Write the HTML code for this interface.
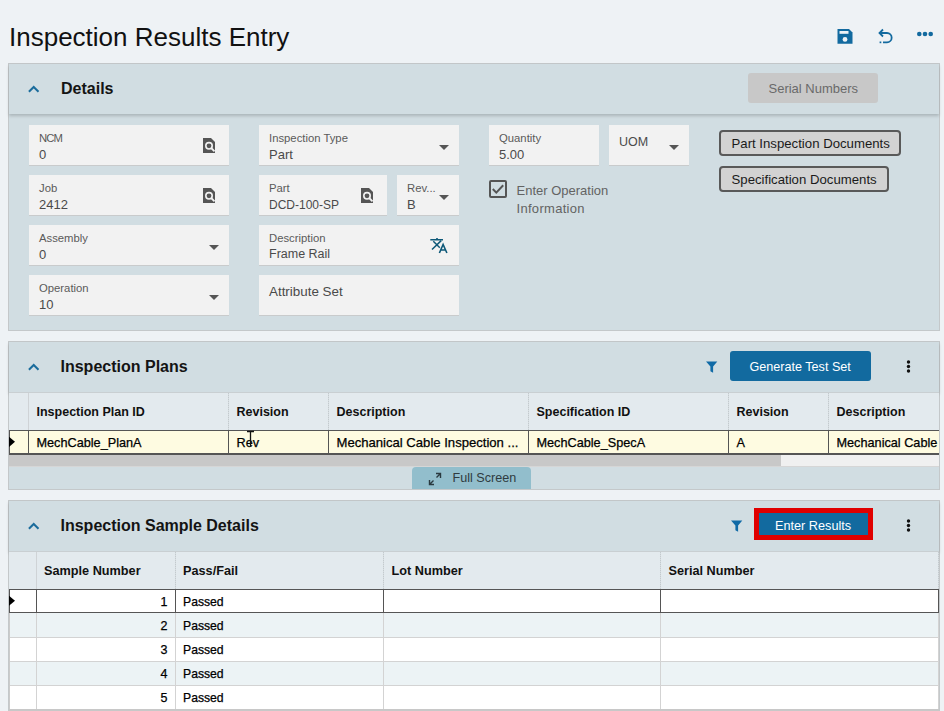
<!DOCTYPE html>
<html><head><meta charset="utf-8">
<style>
*{box-sizing:border-box;margin:0;padding:0}
html,body{width:944px;height:711px;overflow:hidden;background:#eef2f5;font-family:"Liberation Sans",sans-serif;position:relative}
.a{position:absolute}
.t{position:absolute;line-height:1;white-space:nowrap}
.panel{position:absolute;left:8px;width:932px;background:#d1dde2;border:1px solid #c4c8ca}
.ph{position:absolute;left:0;top:0;width:930px;height:50px;box-shadow:0 2px 3px rgba(0,0,0,.18)}
.fld{position:absolute;background:#f2f2f2;border-bottom:1px solid #c9cbcc}
.lbl{position:absolute;font-size:11.3px;color:#5a5a5a;line-height:1;white-space:nowrap}
.val{position:absolute;font-size:13px;color:#4a4a4a;line-height:1;white-space:nowrap}
.dd{position:absolute;width:0;height:0;border-left:5px solid transparent;border-right:5px solid transparent;border-top:5px solid #555}
.chev{position:absolute;width:8px;height:8px;border-left:1.8px solid #1f6f9c;border-top:1.8px solid #1f6f9c;transform:rotate(45deg);margin-top:0.5px}
.btn{position:absolute;background:#126a9f;border-radius:3px}
.gh{position:absolute;background:#e3eaee}
.hd{position:absolute;font-size:13px;font-weight:bold;color:#111;line-height:1;white-space:nowrap}
.cell{position:absolute;font-size:13px;color:#000;-webkit-text-stroke:0.25px #000;line-height:1;white-space:nowrap}
</style></head>
<body>
<!-- Title -->
<div class="t" style="left:9px;top:23.7px;font-size:26px;color:#111">Inspection Results Entry</div>

<!-- toolbar icons -->
<svg class="a" style="left:836px;top:28px" width="18" height="17" viewBox="0 0 18 17">
  <path d="M1.5 1 H13 L16.5 4.5 V15.8 H1.5 Z" fill="#126a9f"/>
  <rect x="3.5" y="3" width="9" height="2.8" fill="#eef2f5"/>
  <circle cx="9" cy="11.4" r="2.4" fill="#eef2f5"/>
</svg>
<svg class="a" style="left:877px;top:28px" width="17" height="17" viewBox="0 0 17 17">
  <path d="M6 1.5 L2.5 5 L6 8.5" fill="none" stroke="#126a9f" stroke-width="1.8"/>
  <path d="M2.5 5 H10 A4.65 4.65 0 0 1 10 14.3 H6" fill="none" stroke="#126a9f" stroke-width="1.8"/>
  <rect x="2.6" y="13.5" width="1.7" height="1.7" fill="#126a9f"/>
</svg>
<svg class="a" style="left:916px;top:30px" width="18" height="8" viewBox="0 0 18 8">
  <circle cx="3.3" cy="4" r="2.3" fill="#126a9f"/>
  <circle cx="9" cy="4" r="2.3" fill="#126a9f"/>
  <circle cx="14.7" cy="4" r="2.3" fill="#126a9f"/>
</svg>

<!-- DETAILS PANEL -->
<div class="panel" style="top:63px;height:268px">
  <div class="ph"></div>
</div>
<svg class="a" style="left:27px;top:84.0px" width="14" height="10" viewBox="0 0 14 10"><path d="M1.9 7.8 L6.7 3 L11.5 7.8" fill="none" stroke="#1b6c9c" stroke-width="2"/></svg>
<div class="t" style="left:61px;top:81.2px;font-size:16px;font-weight:bold;color:#141414">Details</div>
<div class="a" style="left:748px;top:73px;width:130px;height:30px;background:#c8c8c8;border-radius:3px"></div>
<div class="t" style="left:768.5px;top:82.2px;font-size:13px;color:#6a6a6a">Serial Numbers</div>

<!-- fields col 1 -->
<div class="fld" style="left:29px;top:125px;width:200px;height:41px"></div>
<div class="lbl" style="left:39px;top:132.7px;letter-spacing:-0.9px">NCM</div>
<div class="val" style="left:39px;top:147.8px">0</div>

<div class="fld" style="left:29px;top:175px;width:200px;height:41px"></div>
<div class="lbl" style="left:39px;top:182.7px">Job</div>
<div class="val" style="left:39px;top:197.8px">2412</div>

<div class="fld" style="left:29px;top:225px;width:200px;height:41px"></div>
<div class="lbl" style="left:39px;top:232.7px">Assembly</div>
<div class="val" style="left:39px;top:247.8px">0</div>
<div class="dd" style="left:209px;top:244.6px"></div>

<div class="fld" style="left:29px;top:275px;width:200px;height:41px"></div>
<div class="lbl" style="left:39px;top:282.7px">Operation</div>
<div class="val" style="left:39px;top:297.8px">10</div>
<div class="dd" style="left:209px;top:294.6px"></div>

<!-- fields col 2 -->
<div class="fld" style="left:259px;top:125px;width:200px;height:41px"></div>
<div class="lbl" style="left:269px;top:132.7px">Inspection Type</div>
<div class="val" style="left:269px;top:147.8px">Part</div>
<div class="dd" style="left:439px;top:144.6px"></div>

<div class="fld" style="left:259px;top:175px;width:128px;height:41px"></div>
<div class="lbl" style="left:269px;top:182.7px">Part</div>
<div class="val" style="left:269px;top:198.8px;font-size:12px">DCD-100-SP</div>

<div class="fld" style="left:397px;top:175px;width:62px;height:41px"></div>
<div class="lbl" style="left:407px;top:182.7px">Rev...</div>
<div class="val" style="left:407px;top:197.8px">B</div>
<div class="dd" style="left:439px;top:194.6px"></div>

<div class="fld" style="left:259px;top:225px;width:200px;height:41px"></div>
<div class="lbl" style="left:269px;top:232.7px">Description</div>
<div class="val" style="left:269px;top:247.8px;font-size:12.5px">Frame Rail</div>

<div class="fld" style="left:259px;top:275px;width:200px;height:41px"></div>
<div class="val" style="left:269px;top:285px;font-size:13.4px">Attribute Set</div>

<!-- col 3 -->
<div class="fld" style="left:489px;top:125px;width:110px;height:41px"></div>
<div class="lbl" style="left:499px;top:132.7px">Quantity</div>
<div class="val" style="left:499px;top:147.8px">5.00</div>

<div class="fld" style="left:609px;top:125px;width:80px;height:41px"></div>
<div class="val" style="left:619px;top:136px;font-size:12.5px">UOM</div>
<div class="dd" style="left:669px;top:144.8px"></div>

<div class="a" style="left:489px;top:180px;width:18px;height:18px;border:2px solid #555;border-radius:2px"></div>
<div class="t" style="left:516.5px;top:183.5px;font-size:13px;color:#636363">Enter Operation</div>
<div class="t" style="left:516.5px;top:201.5px;font-size:13px;color:#636363;letter-spacing:0.3px">Information</div>

<div class="a" style="left:719px;top:130px;width:182px;height:26px;background:#d2d2d2;border:2px solid #595959;border-radius:4px"></div>
<div class="t" style="left:731.5px;top:137px;font-size:13.2px;color:#1a1a1a">Part Inspection Documents</div>
<div class="a" style="left:719px;top:166px;width:170px;height:26px;background:#d2d2d2;border:2px solid #595959;border-radius:4px"></div>
<div class="t" style="left:731.5px;top:172.5px;font-size:13.2px;color:#1a1a1a">Specification Documents</div>

<!-- INSPECTION PLANS PANEL -->
<div class="panel" style="top:341px;height:149px">
  <div class="ph"></div>
</div>
<svg class="a" style="left:27px;top:362.0px" width="14" height="10" viewBox="0 0 14 10"><path d="M1.9 7.8 L6.7 3 L11.5 7.8" fill="none" stroke="#1b6c9c" stroke-width="2"/></svg>
<div class="t" style="left:60.5px;top:359px;font-size:16px;font-weight:bold;color:#141414">Inspection Plans</div>
<div class="btn" style="left:730px;top:351px;width:141px;height:30px"></div>
<div class="t" style="left:749.5px;top:360.5px;font-size:12.6px;color:#fff">Generate Test Set</div>

<!-- SAMPLE PANEL -->
<div class="panel" style="top:500px;height:220px">
  <div class="ph"></div>
</div>
<svg class="a" style="left:27px;top:521.0px" width="14" height="10" viewBox="0 0 14 10"><path d="M1.9 7.8 L6.7 3 L11.5 7.8" fill="none" stroke="#1b6c9c" stroke-width="2"/></svg>
<div class="t" style="left:60.5px;top:517.5px;font-size:16px;font-weight:bold;color:#141414">Inspection Sample Details</div>
<div class="a" style="left:754px;top:508px;width:119px;height:32px;background:#126a9f;border:5px solid #e00000"></div>
<div class="t" style="left:775px;top:520px;font-size:12.7px;color:#fff">Enter Results</div>


<!-- plans grid -->
<div class="gh" style="left:9px;top:392px;width:930px;height:38px;border-top:1px solid #c9cfd2"></div>
<div class="a" style="left:28px;top:393px;width:1px;height:37px;background:#cfd3d6"></div>
<div class="a" style="left:228px;top:393px;height:37px;width:1px;background:repeating-linear-gradient(#c3cace 0 1px,#d7dde0 1px 2px)"></div>
<div class="a" style="left:328px;top:393px;height:37px;width:1px;background:repeating-linear-gradient(#c3cace 0 1px,#d7dde0 1px 2px)"></div>
<div class="a" style="left:528px;top:393px;height:37px;width:1px;background:repeating-linear-gradient(#c3cace 0 1px,#d7dde0 1px 2px)"></div>
<div class="a" style="left:728px;top:393px;height:37px;width:1px;background:repeating-linear-gradient(#c3cace 0 1px,#d7dde0 1px 2px)"></div>
<div class="a" style="left:828px;top:393px;height:37px;width:1px;background:repeating-linear-gradient(#c3cace 0 1px,#d7dde0 1px 2px)"></div>
<div class="hd" style="left:36.5px;top:406px;font-size:12.5px">Inspection Plan ID</div>
<div class="hd" style="left:236.5px;top:406px;font-size:12.5px">Revision</div>
<div class="hd" style="left:336.5px;top:406px;font-size:12.5px">Description</div>
<div class="hd" style="left:536.5px;top:406px;font-size:12.5px">Specification ID</div>
<div class="hd" style="left:736.5px;top:406px;font-size:12.5px">Revision</div>
<div class="hd" style="left:836.5px;top:406px;font-size:12.5px">Description</div>
<div class="a" style="left:9px;top:430px;width:930px;height:25px;background:#fefbe1;border-top:1px solid #555;border-bottom:2px solid #555;border-left:1px solid #555"></div>
<div class="a" style="left:28px;top:430px;width:1px;height:24px;background:#555"></div>
<div class="a" style="left:228px;top:430px;width:1px;height:24px;background:#555"></div>
<div class="a" style="left:328px;top:430px;width:1px;height:24px;background:#555"></div>
<div class="a" style="left:528px;top:430px;width:1px;height:24px;background:#555"></div>
<div class="a" style="left:728px;top:430px;width:1px;height:24px;background:#555"></div>
<div class="a" style="left:828px;top:430px;width:1px;height:24px;background:#555"></div>
<svg class="a" style="left:9px;top:436px" width="7" height="12"><path d="M0 0.7 L6 5.8 L0 10.9 Z" fill="#000"/></svg>
<div class="cell" style="left:36.5px;top:437.3px;font-size:12.7px">MechCable_PlanA</div>
<div class="cell" style="left:236.5px;top:437.3px;font-size:12.7px">Rev</div>
<div class="cell" style="left:336.5px;top:436.2px;font-size:13.1px">Mechanical Cable Inspection ...</div>
<div class="cell" style="left:536.5px;top:437.3px;font-size:12.7px">MechCable_SpecA</div>
<div class="cell" style="left:736.5px;top:437.3px;font-size:12.7px">A</div>
<div class="cell" style="left:836.5px;top:437.3px;font-size:12.7px;width:103px;overflow:hidden">Mechanical Cable</div>
<svg class="a" style="left:246px;top:430px" width="10" height="18"><path d="M1 1.5 H8 M4.5 1.5 V16" stroke="#111" stroke-width="1.3" fill="none"/></svg>
<div class="a" style="left:9px;top:455px;width:772px;height:11px;background:#c8c8c8"></div><div class="a" style="left:9px;top:466px;width:772px;height:1px;background:#d6d6d6"></div>
<div class="a" style="left:781px;top:455px;width:158px;height:12px;background:#f0f0f0;border-bottom:1px solid #d6d6d6"></div>
<div class="a" style="left:412px;top:467px;width:119px;height:22px;background:#92becc;border-radius:4px 4px 0 0"></div>
<svg class="a" style="left:428px;top:472px" width="14" height="14" viewBox="0 0 14 14">
  <path d="M8 1.5 H12.5 V6 M12.5 1.5 L8.5 5.5 M6 12.5 H1.5 V8 M1.5 12.5 L5.5 8.5" stroke="#2a3a40" stroke-width="1.4" fill="none"/>
</svg>
<div class="t" style="left:452.5px;top:471.6px;font-size:12.6px;color:#2f3b40">Full Screen</div>

<!-- sample grid -->
<div class="gh" style="left:9px;top:551px;width:930px;height:38px;border-top:1px solid #c9cfd2"></div>
<div class="a" style="left:36px;top:552px;width:1px;height:37px;background:#cfd3d6"></div>
<div class="a" style="left:175px;top:552px;height:37px;width:1px;background:repeating-linear-gradient(#c3cace 0 1px,#d7dde0 1px 2px)"></div>
<div class="a" style="left:383px;top:552px;height:37px;width:1px;background:repeating-linear-gradient(#c3cace 0 1px,#d7dde0 1px 2px)"></div>
<div class="a" style="left:660px;top:552px;height:37px;width:1px;background:repeating-linear-gradient(#c3cace 0 1px,#d7dde0 1px 2px)"></div>
<div class="a" style="left:938px;top:552px;height:37px;width:1px;background:repeating-linear-gradient(#c3cace 0 1px,#d7dde0 1px 2px)"></div>
<div class="hd" style="left:44px;top:565.4px;font-size:12.7px">Sample Number</div>
<div class="hd" style="left:183px;top:565.4px;font-size:12.7px">Pass/Fail</div>
<div class="hd" style="left:391.5px;top:565.4px;font-size:12.7px">Lot Number</div>
<div class="hd" style="left:668.5px;top:565.4px;font-size:12.7px">Serial Number</div>
<!-- rows -->
<div class="a" style="left:9px;top:613px;width:930px;height:98px;background:#fff"></div>
<div class="a" style="left:9px;top:613px;width:930px;height:24px;background:#ecf3f5"></div>
<div class="a" style="left:9px;top:661px;width:930px;height:24px;background:#ecf3f5"></div>
<div class="a" style="left:9px;top:613px;width:930px;height:98px;background:linear-gradient(#d3d3d3,#d3d3d3) 0 24px/100% 1px no-repeat, linear-gradient(#d3d3d3,#d3d3d3) 0 48px/100% 1px no-repeat, linear-gradient(#d3d3d3,#d3d3d3) 0 72px/100% 1px no-repeat, linear-gradient(#d3d3d3,#d3d3d3) 0 96px/100% 1px no-repeat"></div>
<div class="a" style="left:36px;top:613px;width:1px;height:98px;background:#d3d3d3"></div>
<div class="a" style="left:175px;top:613px;width:1px;height:98px;background:#d3d3d3"></div>
<div class="a" style="left:383px;top:613px;width:1px;height:98px;background:#d3d3d3"></div>
<div class="a" style="left:660px;top:613px;width:1px;height:98px;background:#d3d3d3"></div>
<div class="a" style="left:938px;top:613px;width:1px;height:98px;background:#d3d3d3"></div>
<div class="a" style="left:9px;top:589px;width:930px;height:24px;background:#fff;border:1px solid #555"></div>
<div class="a" style="left:36px;top:589px;width:1px;height:24px;background:#555"></div>
<div class="a" style="left:175px;top:589px;width:1px;height:24px;background:#555"></div>
<div class="a" style="left:383px;top:589px;width:1px;height:24px;background:#555"></div>
<div class="a" style="left:660px;top:589px;width:1px;height:24px;background:#555"></div>
<div class="a" style="left:9px;top:613px;width:1px;height:98px;background:#cbcbcb"></div>
<div class="a" style="left:9px;top:709px;width:930px;height:2px;background:#c8c8c8"></div>
<svg class="a" style="left:9px;top:595px" width="7" height="12"><path d="M0 0.8 L6 5.8 L0 10.8 Z" fill="#000"/></svg>
<div class="cell" style="left:100px;width:67.5px;text-align:right;top:595.9px;font-size:12.5px">1</div>
<div class="cell" style="left:183px;top:595.9px;font-size:12.2px">Passed</div>
<div class="cell" style="left:100px;width:67.5px;text-align:right;top:619.9px;font-size:12.5px">2</div>
<div class="cell" style="left:183px;top:619.9px;font-size:12.2px">Passed</div>
<div class="cell" style="left:100px;width:67.5px;text-align:right;top:643.9px;font-size:12.5px">3</div>
<div class="cell" style="left:183px;top:643.9px;font-size:12.2px">Passed</div>
<div class="cell" style="left:100px;width:67.5px;text-align:right;top:667.9px;font-size:12.5px">4</div>
<div class="cell" style="left:183px;top:667.9px;font-size:12.2px">Passed</div>
<div class="cell" style="left:100px;width:67.5px;text-align:right;top:691.9px;font-size:12.5px">5</div>
<div class="cell" style="left:183px;top:691.9px;font-size:12.2px">Passed</div>

<!-- search icons -->
<svg class="a" style="left:202px;top:137px" width="14" height="17" viewBox="0 0 14 17"><use href="#srch"/></svg>
<svg class="a" style="left:202px;top:187px" width="14" height="17" viewBox="0 0 14 17"><use href="#srch"/></svg>
<svg class="a" style="left:360px;top:187px" width="14" height="17" viewBox="0 0 14 17"><use href="#srch"/></svg>
<svg width="0" height="0" style="position:absolute">
 <defs>
  <g id="srch">
   <path d="M1 1 H9 L13 5 V16 H1 Z" fill="#555"/>
   <circle cx="7" cy="8.8" r="3.2" fill="none" stroke="#f2f2f2" stroke-width="1.6"/>
   <path d="M9.2 11 L12.5 14.3" stroke="#f2f2f2" stroke-width="1.8"/>
  </g>
  <g id="filt"><path d="M0 0.4 H11.3 L7.1 5.6 V11.8 L4.4 10.2 V5.6 Z" fill="#106aa6"/></g>
  <g id="keb"><circle cx="2.5" cy="2" r="1.7" fill="#111"/><circle cx="2.5" cy="6.5" r="1.7" fill="#111"/><circle cx="2.5" cy="11" r="1.7" fill="#111"/></g>
 </defs>
</svg>
<!-- translate -->
<svg class="a" style="left:430px;top:237px" width="18" height="17" viewBox="0 0 18 17">
  <path d="M0.3 2.8 H13 M7 1 V2.8" stroke="#0d5878" stroke-width="1.6" fill="none"/>
  <path d="M3.3 4.3 L9.8 10.8 M11.2 3.6 L2 12.5" stroke="#0d5878" stroke-width="1.5" fill="none"/>
  <path d="M9.4 16 L13.1 7.4 L16.9 16 M10.6 13 H15.5" stroke="#0d5878" stroke-width="1.6" fill="none"/>
</svg>
<!-- checkmark -->
<svg class="a" style="left:489px;top:180px" width="18" height="18" viewBox="0 0 18 18">
  <path d="M3.8 9 L7.3 12.6 L14.2 5.3" stroke="#555" stroke-width="2" fill="none"/>
</svg>
<!-- filters & kebabs -->
<svg class="a" style="left:706px;top:361px" width="12" height="13" viewBox="0 0 12 13"><use href="#filt"/></svg>
<svg class="a" style="left:731px;top:520px" width="12" height="13" viewBox="0 0 12 13"><use href="#filt"/></svg>
<svg class="a" style="left:905.5px;top:359.5px" width="5" height="13" viewBox="0 0 5 13"><use href="#keb"/></svg>
<svg class="a" style="left:905.5px;top:518.5px" width="5" height="13" viewBox="0 0 5 13"><use href="#keb"/></svg>
</body></html>
